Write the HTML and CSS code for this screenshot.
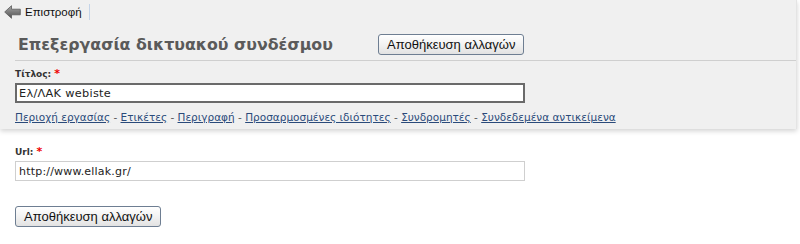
FILE: index.html
```html
<!DOCTYPE html>
<html lang="el">

<head>
    <meta charset="UTF-8">
    <title>Επεξεργασία δικτυακού συνδέσμου</title>
    <link rel="stylesheet" href="styles.css">
</head>

<body>
    <div class="panel">
        <div class="toolbar">
            <a href="#" class="back">
                <svg class="back__icon" width="17" height="14" viewBox="0 0 17 14">
                    <defs>
                        <linearGradient id="ar" x1="0" y1="0" x2="0" y2="1">
                            <stop offset="0" stop-color="#a8a8a8" />
                            <stop offset="1" stop-color="#505050" />
                        </linearGradient>
                    </defs>
                    <polygon points="0.7,7 7.5,0.7 7.5,4.2 16.3,4.2 16.3,9.8 7.5,9.8 7.5,13.3" fill="url(#ar)" stroke="#5a5a5a" stroke-width="0.8" stroke-linejoin="round" />
                </svg>
                <span>Επιστροφή</span>
            </a>
            <span class="toolbar__sep"></span>
        </div>

        <div class="head">
            <h1 class="head__title">Επεξεργασία δικτυακού συνδέσμου</h1>
            <button class="btn">Αποθήκευση αλλαγών</button>
        </div>

        <div class="field">
            <label class="field__label">Τίτλος: <span class="req">*</span></label>
            <input class="field__input field__input--focus" type="text" value="Ελ/ΛΑΚ webiste">
        </div>

        <div class="tabs">
            <a href="#">Περιοχή εργασίας</a> - <a href="#">Ετικέτες</a> - <a href="#">Περιγραφή</a> - <a href="#">Προσαρμοσμένες ιδιότητες</a> - <a href="#">Συνδρομητές</a> - <a href="#">Συνδεδεμένα αντικείμενα</a>
        </div>
    </div>

    <div class="body">
        <div class="field">
            <label class="field__label">Url: <span class="req">*</span></label>
            <input class="field__input" type="text" value="http://www.ellak.gr/">
        </div>

        <div class="actions">
            <button class="btn">Αποθήκευση αλλαγών</button>
        </div>
    </div>
</body>

</html>
```

FILE: styles.css
```css
:root {
    --ff-primary: 'DejaVu Sans', Verdana, sans-serif;
    --ff-button: 'Liberation Sans', Arial, sans-serif;
    --clr-panel: #f0f0f0;
    --clr-link: #2a4a7a;
    --clr-text: #333;
}

* {
    margin: 0;
    padding: 0;
    box-sizing: border-box;
}

body {
    background: #fff;
    color: var(--clr-text);
    font-family: var(--ff-primary);
    font-size: 10px;
}

.panel {
    background: var(--clr-panel);
    margin-right: 3px;
    padding: 0 0 5px 15px;
    box-shadow: 0 2px 5px rgba(0, 0, 0, 0.18);
    border-right: 1px solid #e4e4e4;
}

.toolbar {
    display: flex;
    align-items: center;
    height: 24px;
    margin-left: -11px;
}

.back {
    display: flex;
    align-items: center;
    gap: 4px;
    color: #111;
    text-decoration: none;
    font-family: var(--ff-button);
    font-size: 11.5px;
}

.toolbar__sep {
    width: 1px;
    height: 16px;
    background: #c4d4e8;
    margin-left: 7px;
}

.head {
    display: flex;
    align-items: center;
    height: 37px;
    padding: 4px 0 0 3px;
    border-bottom: 1px solid #cfcfcf;
}

.head__title {
    font-size: 15.8px;
    font-weight: bold;
    color: #5a5a5a;
    width: 360px;
}

.btn {
    font-family: var(--ff-button);
    font-size: 13px;
    color: #111;
    height: 21px;
    padding: 0 8px;
    border: 1px solid #6e7e92;
    border-radius: 3px;
    background: linear-gradient(#ffffff, #f2f2f2 50%, #e2e2e2);
}

.field {
    display: flex;
    flex-direction: column;
    gap: 3px;
    padding-top: 6px;
}

.field__label {
    font-weight: bold;
    font-size: 9px;
    color: #333;
}

.req {
    color: #e00;
    font-size: 11px;
}

.field__input {
    width: 510px;
    height: 20px;
    border: 1px solid #cfcfcf;
    background: #fff;
    padding: 0 3px;
    font-family: var(--ff-primary);
    font-size: 11px;
    letter-spacing: 0.2px;
    color: #222;
    outline: none;
}

.field__input--focus {
    border: 2px solid #6a6a6a;
    padding: 0 2px;
    font-size: 11.3px;
    letter-spacing: 0.3px;
}

.tabs {
    padding-top: 7px;
    color: #555;
    font-size: 10.5px;
    line-height: 14px;
}

.tabs a {
    color: var(--clr-link);
}

.body {
    padding: 16px 0 0 15px;
}

.body .field {
    padding-top: 0;
}

.actions {
    padding-top: 25px;
}
```
